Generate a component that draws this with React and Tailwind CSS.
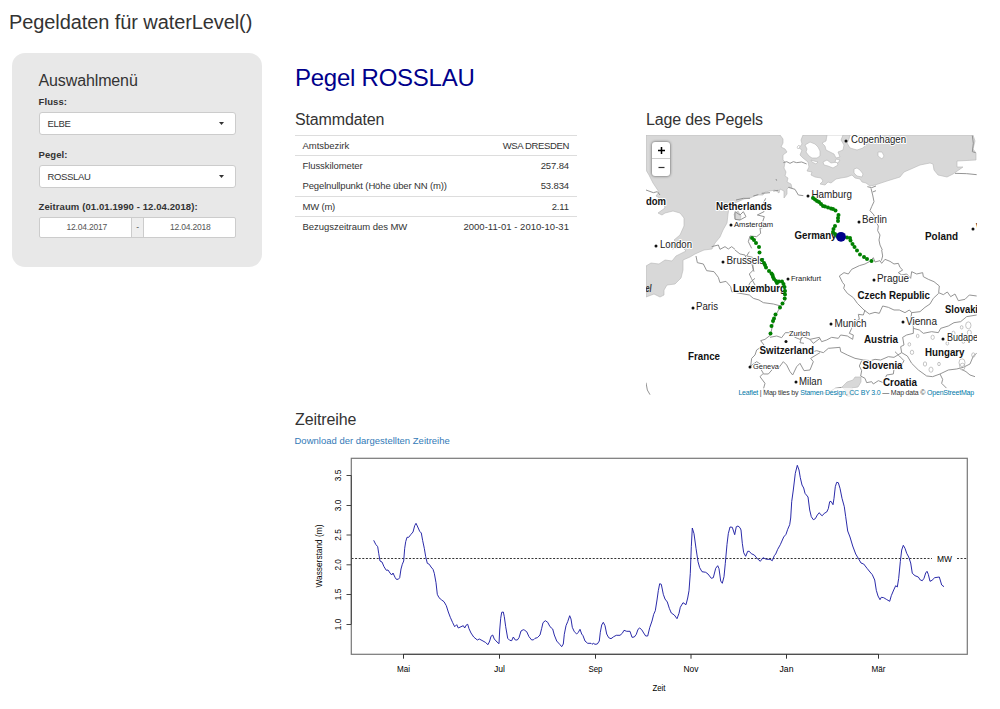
import React from 'react';

const FONT = "font-['Liberation_Sans',Arial,sans-serif]";

const rows = [
  ['Amtsbezirk', 'WSA DRESDEN', 'border-t border-[#ddd] h-[20px]', 'tracking-[-0.03px]', 'tracking-[-0.35px]'],
  ['Flusskilometer', '257.84', 'border-t border-[#ddd] h-[21px]', 'tracking-[-0.09px]', 'tracking-[-0.12px]'],
  ['Pegelnullpunkt (Höhe über NN (m))', '53.834', 'h-[20px]', 'tracking-[-0.14px]', 'tracking-[-0.12px]'],
  ['MW (m)', '2.11', 'border-t border-[#ddd] h-[20px]', 'tracking-[-0.2px]', 'tracking-[-0.12px]'],
  ['Bezugszeitraum des MW', '2000-11-01 - 2010-10-31', 'border-t border-[#ddd] h-[21px]', 'tracking-[-0.04px]', 'tracking-[0.03px]'],
];

function Select({ value }) {
  return (
    <div className="mt-[4px] flex h-[23px] w-[197px] items-center justify-between rounded-[3px] border border-[#ccc] bg-white pl-[8px] pr-[11px] text-[9.5px] font-normal leading-none text-[#333]">
      <span className="tracking-[-0.35px]">{value}</span>
      <svg width="5" height="3" viewBox="0 0 5 3"><path d="M0 0h5L2.5 3z" fill="#333" /></svg>
    </div>
  );
}

function Sidebar() {
  return (
    <aside className="h-[214px] w-[250px] shrink-0 rounded-[13px] bg-[#e8e8e8] pl-[26.5px] pt-[19px] text-[9.5px] font-bold leading-[12px]">
      <h2 className="text-[16px] font-normal leading-[18px] tracking-[-0.12px]">Auswahlmenü</h2>
      <div className="mt-[6px] tracking-[0.1px]">Fluss:</div>
      <Select value="ELBE" />
      <div className="mt-[14px] tracking-[0.1px]">Pegel:</div>
      <Select value="ROSSLAU" />
      <div className="mt-[13px] whitespace-nowrap tracking-[0.1px]">Zeitraum (01.01.1990 - 12.04.2018):</div>
      <div className="mt-[4px] flex h-[21px] w-[197px] items-stretch rounded-[2px] border border-[#ccc] bg-white text-[8.5px] font-normal leading-[19px] tracking-[-0.18px] text-[#555]">
        <span className="flex-1 pl-[3px] text-center">12.04.2017</span>
        <span className="w-[13px] border-x border-[#ccc] bg-[#eee] text-center">-</span>
        <span className="flex-1 pl-[2px] text-center">12.04.2018</span>
      </div>
    </aside>
  );
}

// Sea areas, in map coordinates
const SEA = [
  'M646 135H780L783 139L783 143L781 147L785 149L787 152L783 155L783 160L785 162L784 168L786 172L785 176L788 178L787 182L791 184L792 188L789 187L787 189L787 194L784 198L784 191L780 189L779 193L775 190L765 192L763 195L757 195L750 198L744 199L735 203L729 208L728 214L727 223L723 230L720 237L715 243L712 249L704 250L695 254L690 257L683 260L683 270L681 278L675 284L667 285L664 290L664 295L660 297L654 294L646 297V266L651 263L659 264L665 260L672 261L676 256L686 251L682 247L672 249L668 245L677 243L674 240L680 235L684 226L684 218L680 213L673 211L665 213L662 215L658 213L665 208L663 200L656 196L659 192L653 183L649 175L646 170Z',
  'M803 135H973L975 141L973 149L976 153L976 160L957 161L957 167L963 167L953 174L947 177L938 175L934 170L933 164L930 163L920 165L911 169L904 172L900 177L887 181L875 185L870 186L866 183L862 182L860 179L855 178L852 175L847 177L841 178L836 179L831 183L828 182L825 185L820 184L823 181L821 178L815 177L811 175L812 172L807 171L809 167L808 162L803 158L800 155L802 150L799 148L802 144L801 140Z',
  'M842 387L847 382L853 380L855 377L861 377L861 382L858 387L852 388L854 395L848 397L846 391Z',
  'M734 214L738 211L741 216L740 220L735 219Z',
];

const ISLANDS = [
  'M805 145L810 142L815 144L818 147L820 151L820 156L817 158L812 158L809 156L806 152L807 149Z',
  'M827 135H843L841 140L844 145L843 150L838 152L840 157L836 158L834 154L830 152L826 150L825 146L822 143L826 141Z',
  'M850 135H876L874 139L868 142L863 148L857 150L850 148L847 143L849 139Z',
  'M878 152L882 152L884 156L882 159L878 156Z',
  'M823 162L827 160L831 163L837 162L838 165L833 168L828 166L824 165Z',
  'M811 160L814 161L818 162L816 164L812 162Z',
  'M836 159L840 160L838 163L835 162Z',
  'M854 169L857 168L860 170L863 174L862 177L857 176L854 173Z',
  'M797 147L799 145L800 147L798 149Z',
];

// Borders and rivers drawn per map tile at triple scale
const TILES = [
  { at: [640, 100], d: [
    'M430 188L440 185L450 190L460 185L470 188L485 186L500 192',
    'M18 270L40 278L52 275L60 285',
    'M445 262L465 268L475 285L490 287',
    'M377 295L370 310L372 335L352 345L373 350L368 365L378 380L360 385L362 400L350 410L330 408L325 425L335 445',
    'M215 440L235 435L240 448L255 440L265 447L275 440L285 448',
    'M285 335L300 345L310 335L318 350L300 360L285 358Z',
    'M288 300L310 295L330 295M340 288L355 284M365 280L390 278M400 273L415 271',
    'M408 237L410 242',
  ] },
  { at: [810, 100], d: [
    'M183 265L188 285L192 305L185 320L180 332L192 345L195 360L205 378L203 392L210 405L207 420L210 435L217 450',
    'M435 220L470 221L500 224', 'M487 107L490 130L487 155L497 158',
    'M172 260L185 263L198 258M188 276L198 272',
  ] },
  { at: [640, 250], d: [
    'M168 18L172 38L190 42L200 62L222 65L235 82L240 98L258 94L272 110L275 125L300 130L328 135L340 145L357 150L370 158L400 162L422 168L437 150',
    'M285 0L300 12L315 15L320 30L338 40L340 60L328 72L334 85L345 105',
    'M328 5L320 18L338 22L335 40L342 65',
    'M345 85L330 98L325 110L335 120L355 120L375 115L395 122L415 115',
    'M422 168L405 200L398 225L392 252',
    'M392 255L375 268L362 272L372 285L350 300L345 315L335 325L332 348L350 335L365 345L358 350L370 370L360 380L375 400L370 418L390 430',
    'M390 262L410 258L425 263L436 248L450 248L465 262L480 268L490 260L510 268L520 280L540 265',
    'M370 372L385 372L400 355L415 355L430 335L440 345L450 365L458 375L470 350L480 340L492 362L510 360L520 335L512 325L540 308',
    'M485 260L480 278L492 280', 'M18 398L22 420L30 434',
  ] },
  { at: [810, 250], d: [
    'M88 78L102 68L115 72L125 58L148 47L165 42L178 35L190 23L195 36L210 32L215 40L225 28L240 34L252 42L265 40L270 52L278 60L265 68L275 75L290 72L302 85L305 65L320 72L338 68L340 80L355 88L372 95L388 108L386 128',
    'M215 0L218 18L214 32',
    'M88 78L98 98L104 105L101 115L112 130L130 143L142 160L162 180L178 192L195 187L208 190L218 168L235 172L252 180L268 180L285 188L298 180L305 188L330 185L345 172L360 162L370 145L386 130',
    'M386 128L400 134L412 126L422 140L435 132L445 152L465 148L478 135L500 138',
    'M165 180L160 195L145 193L148 208L135 215L125 235L118 250L130 255L128 268L112 258L92 255L85 265L65 262L50 270L35 275L28 262L0 268',
    'M0 308L20 302L40 308L55 295L90 292L92 305L112 315L135 325L160 330L182 332L195 328L212 330L235 320L252 322L275 308L272 290L282 285L278 262L290 255L310 250L310 230L302 210L305 188',
    'M310 235L328 240L340 250L365 245L385 248L392 235L415 228L432 218L452 215L470 200L500 195',
    'M275 308L292 318L305 340L325 360L350 378L368 380L390 372L415 360L440 357L460 352L480 342L490 318L500 310',
    'M155 332L148 348L155 362L152 378L165 385L170 398L185 395L190 402L205 392L220 398L230 375L250 372L252 358L275 345L282 332L268 318L255 305',
    'M390 372L398 388L395 400L410 415', 'M455 358L468 365L480 375L495 380',
    'M30 430L55 428L75 415L95 412',
  ] },
];

const LAKES = [[475, 226, 8], [455, 232, 4], [478, 248, 6], [323, 258, 4], [368, 262, 5], [298, 283, 4], [306, 307, 5], [430, 250, 5], [345, 342, 5], [363, 359, 6], [387, 342, 4], [456, 338, 9], [457, 350, 8], [460, 275, 4], [490, 315, 5], [412, 280, 4]];

const CITIES = [
  ['Copenhagen', 846, 141, 851, 143.3, 10.5, 55], ['Hamburg', 808, 196, 811.5, 198.3, 10.5, 40.5],
  ['Amsterdam', 731, 225, 734, 227, 8, 39], ['London', 656, 246, 660, 248.3, 10.5, 32],
  ['Berlin', 859, 222, 862, 223.3, 10.5, 25], ['Brussels', 723, 262, 726.5, 264.3, 10.5, 38],
  ['Frankfurt', 788, 279, 791, 280.5, 8, 30], ['Prague', 874, 280, 877, 282, 10.5, 32],
  ['Paris', 693, 308, 696, 310.3, 10.5, 22], ['Munich', 831, 324, 834.5, 326.5, 10.5, 32],
  ['Vienna', 903, 322, 906, 325, 10.5, 31], ['Zurich', 786, 341.5, 789, 335.5, 8, 21],
  ['Geneva', 750, 367, 753, 369, 8, 26], ['Milan', 796, 382, 799, 385, 10.5, 23],
  ['Budape', 943, 339, 947, 341, 10.5, 31], ['W', 973, 229, 976, 231, 10, 10],
];

const COUNTRIES = [
  ['Netherlands', 716, 209.5, 56], ['Germany', 794.5, 238.5, 42], ['Poland', 925, 240, 33],
  ['dom', 646, 204.5, 20], ['Luxemburg', 733, 291.7, 53], ['Czech Republic', 857.5, 298.7, 72.5],
  ['Slovaki', 945, 313, 33], ['France', 688, 359.5, 32], ['Switzerland', 759.5, 353.5, 54.5],
  ['Austria', 864, 343, 34], ['Hungary', 925, 355.5, 39.5], ['Slovenia', 862.5, 368.5, 40], ['Croatia', 883, 386, 34],
];

const STATIONS = [
  [752, 238], [754, 240], [756, 243], [759, 247], [759.5, 252.5], [762, 260], [764, 263], [765, 265], [766, 267.5], [769, 271], [771.5, 273.5], [772.5, 275], [773, 277], [774, 279], [776, 281], [777, 283], [779, 281.5], [782, 281.5], [783.5, 284], [784.5, 287], [785, 291], [785, 294.5], [784.7, 298.5], [782.5, 303.5], [780, 307.5], [775.5, 314.5], [774, 318.5], [773, 321], [771.5, 326], [770.5, 333.5],
  [813, 198], [815, 199.5], [817, 201], [819, 202], [821, 204], [823, 206], [825, 206.5], [828, 207.5], [831, 208.5], [833, 209], [835.5, 210.5], [838.5, 215], [838, 218], [838, 221], [835, 226], [833.5, 229], [833, 232], [835, 234], [837, 236], [847, 237.5], [850, 238], [850.5, 240.5], [852.5, 244], [854.5, 247], [857, 250.5], [860, 254.5], [864, 257], [867, 259], [871.5, 261],
];

function GaugeMap() {
  return (
    <div className="relative h-[262px] w-[331px] overflow-hidden">
      <svg className="block h-full w-full" viewBox="646 135 331 262" fontFamily="'Liberation Sans', Arial, sans-serif">
        {SEA.map((d) => <path key={d} d={d} fill="#d8d8d8" stroke="#b5b5b5" strokeWidth="0.6" />)}
        {ISLANDS.map((d) => <path key={d} d={d} fill="#fff" stroke="#b5b5b5" strokeWidth="0.6" />)}
        {TILES.map(({ at, d }) => (
          <g key={at.join()} transform={`translate(${at[0]} ${at[1]}) scale(0.33333)`} fill="none" stroke="#8c8c8c" strokeWidth="2.8" strokeLinejoin="round">
            {d.map((p) => <path key={p} d={p} />)}
          </g>
        ))}
        <g transform="translate(810 250) scale(0.33333)" fill="none" stroke="#b0b0b0" strokeWidth="2.2">
          {LAKES.map(([x, y, r]) => <ellipse key={`${x}-${y}`} cx={x} cy={y} rx={r} ry={r * 1.3} />)}
        </g>
        <text x="645.5" y="291.5" fontSize="10" fontWeight="bold" fontStyle="italic" fill="#333" textLength="6" lengthAdjust="spacingAndGlyphs">el</text>
        <g stroke="#fff" strokeWidth="2" strokeLinejoin="round" paintOrder="stroke">
          {CITIES.map(([n, , , x, y, s, w]) => (
            <text key={n} x={x} y={y} fontSize={s} textLength={w} lengthAdjust="spacingAndGlyphs" fill="#222">{n}</text>
          ))}
          {COUNTRIES.map(([n, x, y, w]) => (
            <text key={n} x={x} y={y} fontSize="10.5" fontWeight="bold" textLength={w} lengthAdjust="spacingAndGlyphs" fill="#111">{n}</text>
          ))}
        </g>
        {CITIES.map(([n, x, y]) => <circle key={n} cx={x} cy={y} r="1.5" fill="#111" />)}
        {STATIONS.map(([x, y]) => <circle key={`${x}-${y}`} cx={x} cy={y} r="2" fill="#008000" />)}
        <circle cx="841" cy="236.8" r="4.9" fill="#00008b" />
      </svg>
      <div className="absolute left-[6px] top-[7px] w-[18px] rounded-[3px] bg-white shadow-[0_0_3px_rgba(0,0,0,0.65)]">
        <div className="flex h-[17px] items-center justify-center border-b border-[#ccc]">
          <svg width="7" height="7" viewBox="0 0 7 7"><path d="M3.5 0v7M0 3.5h7" stroke="#000" strokeWidth="1.5" /></svg>
        </div>
        <div className="flex h-[17px] items-center justify-center">
          <svg width="7" height="7" viewBox="0 0 7 7"><path d="M.5 3.5h6" stroke="#333" strokeWidth="1.2" /></svg>
        </div>
      </div>
      <div className="absolute bottom-0 right-0 whitespace-nowrap bg-white/70 pl-[3px] pr-[3px] text-[7px] leading-[9px] tracking-[-0.185px] text-[#333] [&>a]:text-[#0078a8]">
        <a>Leaflet</a> | Map tiles by <a>Stamen Design</a>, <a>CC BY 3.0</a> — Map data © <a>OpenStreetMap</a>
      </div>
    </div>
  );
}

// Water level curve in three stretches, each with its own origin, at triple scale
const CURVE = [
  [285, 400, '266,421 272,433 278,440 281,460 285,483 291,486 297,500 304,511 309,510 315,519 320,525 324,519 330,532 334,538 340,538 344,533 348,507 352,493 356,483 359,445 362,425 366,412 371,412 378,403 384,396 389,377 393,370 397,378 404,394 409,399 413,422 418,445 422,470 427,490 433,493 438,501 444,508 448,520 453,548 457,583 462,593 470,600 477,605 484,617 490,636 496,652 503,668 509,680 515,674 520,684 528,680 535,677 539,684 543,676 548,673 552,686 558,699 566,711 577,720 583,717 594,723 601,727 609,734 614,723 618,709 623,705 628,717 636,726 642,731 644,690 647,655 650,637 655,636 658,650 662,680 668,715 674,721 680,722 685,711 691,720 697,720 702,713 708,693 715,689'],
  [500, 450, '73,540 80,545 87,560 95,570 101,569 105,565 112,563 120,555 125,535 129,518 136,512 143,517 150,530 158,537 163,555 170,573 179,583 185,590 190,582 193,553 198,527 203,515 209,497 213,507 217,532 223,545 230,552 235,547 240,538 245,552 249,557 255,573 263,580 273,580 276,583 280,580 285,583 292,582 298,573 301,547 305,525 310,517 315,527 320,552 326,563 333,566 341,560 349,556 360,556 367,550 372,541 380,544 390,544 396,562 403,561 409,553 414,538 419,534 425,539 431,549 437,558 443,558 449,533 456,513 461,493 466,482 471,450 475,422 479,401 484,403 490,433 495,447 502,456 508,475 514,489 523,495 531,506 537,490 541,472 549,458 558,464 563,444 567,422 571,370 574,290 577,234 582,251 588,295 594,335 599,353 606,365 617,367 624,372 634,385 640,383 647,355 653,347 657,356 662,393 667,400 672,380 676,340 681,283 685,251 690,231 697,232 704,254 709,230 714,228'],
  [730, 450, '30,233 33,240 37,280 41,308 47,319 53,304 58,304 64,311 73,315 81,325 91,334 99,323 109,328 120,328 127,332 133,317 137,312 143,298 151,284 161,261 168,253 173,238 179,224 182,204 185,155 190,120 196,70 202,46 207,60 211,83 216,105 221,114 225,130 234,141 239,180 244,200 250,209 256,206 262,195 268,188 272,194 277,197 283,190 290,186 295,176 299,155 303,154 309,164 312,145 316,110 320,97 325,98 330,115 336,145 343,170 347,200 353,243 360,261 368,288 377,312 386,327 393,339 401,342 411,355 420,366 427,374 434,390 439,421 444,438 450,449 454,442 461,443 469,448 479,454 484,437 491,420 497,407 502,411 506,385 511,335 515,300 520,286 525,295 530,310 536,321 542,339 547,370 555,377 565,381 571,390 577,392 582,385 587,369 591,364 595,373 600,394 606,391 614,383 628,381 635,405 642,410'],
];

const linePoints = CURVE.map(([ox, oy, pts]) =>
  pts.split(' ').map((p) => {
    const [x, y] = p.split(',').map(Number);
    return `${(ox + x / 3).toFixed(1)},${(oy + y / 3).toFixed(1)}`;
  }).join(' ')
).join(' ');

const Y_TICKS = [['3.5', 475.5], ['3.0', 505.5], ['2.5', 535], ['2.0', 564.8], ['1.5', 594.5], ['1.0', 624.5]];
const X_TICKS = [['Mai', 403.5, 13], ['Jul', 499.5, 11], ['Sep', 595.5, 14], ['Nov', 691, 15], ['Jan', 786.5, 14], ['Mär', 878.5, 14]];

function Chart() {
  return (
    <svg className="block h-[250px] w-[682px]" viewBox="295 450 682 250" fontFamily="'Liberation Sans', Arial, sans-serif" fontSize="8.5" fill="#000">
      <path d="M351.5 558.5H932M957 558.5H967" stroke="#333" strokeWidth="1" strokeDasharray="2 1.6" />
      <rect x="351.3" y="458.3" width="616" height="196" fill="none" stroke="#777" strokeWidth="1.2" />
      <polyline points={linePoints} fill="none" stroke="#2020a4" strokeWidth="0.95" strokeLinejoin="round" />
      {Y_TICKS.map(([t, y]) => (
        <g key={t}>
          <path d={`M346.5 ${y}H351.3`} stroke="#444" strokeWidth="1" />
          <text transform={`translate(341 ${y}) rotate(-90)`} textAnchor="middle" textLength="11.5" lengthAdjust="spacingAndGlyphs">{t}</text>
        </g>
      ))}
      <path d="M403.5 654.3H878.5M351.3 475.5V624.3" stroke="#444" strokeWidth="1" />
      {X_TICKS.map(([t, x, w]) => (
        <g key={t}>
          <path d={`M${x} 654V658.7`} stroke="#333" strokeWidth="1" />
          <text x={x} y="672" textAnchor="middle" textLength={w} lengthAdjust="spacingAndGlyphs">{t}</text>
        </g>
      ))}
      <text x="944.5" y="561.8" textAnchor="middle" textLength="15" lengthAdjust="spacingAndGlyphs">MW</text>
      <text x="659" y="690.7" textAnchor="middle" textLength="13" lengthAdjust="spacingAndGlyphs">Zeit</text>
      <text transform="translate(321.7 556) rotate(-90)" textAnchor="middle" textLength="63" lengthAdjust="spacingAndGlyphs">Wasserstand (m)</text>
    </svg>
  );
}

export default function App() {
  return (
    <div className={`h-[709px] w-[1000px] overflow-hidden bg-white text-[#333] ${FONT}`}>
      <h1 className="h-[53px] pl-[9px] pt-[10px] text-[20px] leading-[24px] tracking-[-0.09px]">Pegeldaten für waterLevel()</h1>
      <div className="flex items-start gap-[33px] pl-[12px]">
        <Sidebar />
        <main className="w-[682px] pt-[11px]">
          <h2 className="text-[24px] leading-[28px] tracking-[-0.25px] text-[#00008b]">Pegel ROSSLAU</h2>
          <div className="mt-[18px] flex h-[287px] justify-between">
            <section className="w-[282px]">
              <h3 className="text-[16px] leading-[20px] tracking-[-0.15px]">Stammdaten</h3>
              <div className="mt-[5px] text-[9.5px] leading-none">
                {rows.map(([k, v, cls, kCls, vCls]) => (
                  <div key={k} className={`flex items-center justify-between pl-[7.5px] pr-[8px] ${cls}`}>
                    <span className={kCls}>{k}</span>
                    <span className={vCls}>{v}</span>
                  </div>
                ))}
              </div>
            </section>
            <section className="w-[331px]">
              <h3 className="mb-[5px] text-[16px] leading-[20px] tracking-[-0.15px]">Lage des Pegels</h3>
              <GaugeMap />
            </section>
          </div>
          <h3 className="mt-[13px] text-[16px] leading-[20px] tracking-[-0.1px]">Zeitreihe</h3>
          <a className="-ml-[0.5px] mt-[5px] block h-[15px] text-[9.5px] leading-[12px] text-[#337ab7]">Download der dargestellten Zeitreihe</a>
          <Chart />
        </main>
      </div>
    </div>
  );
}
